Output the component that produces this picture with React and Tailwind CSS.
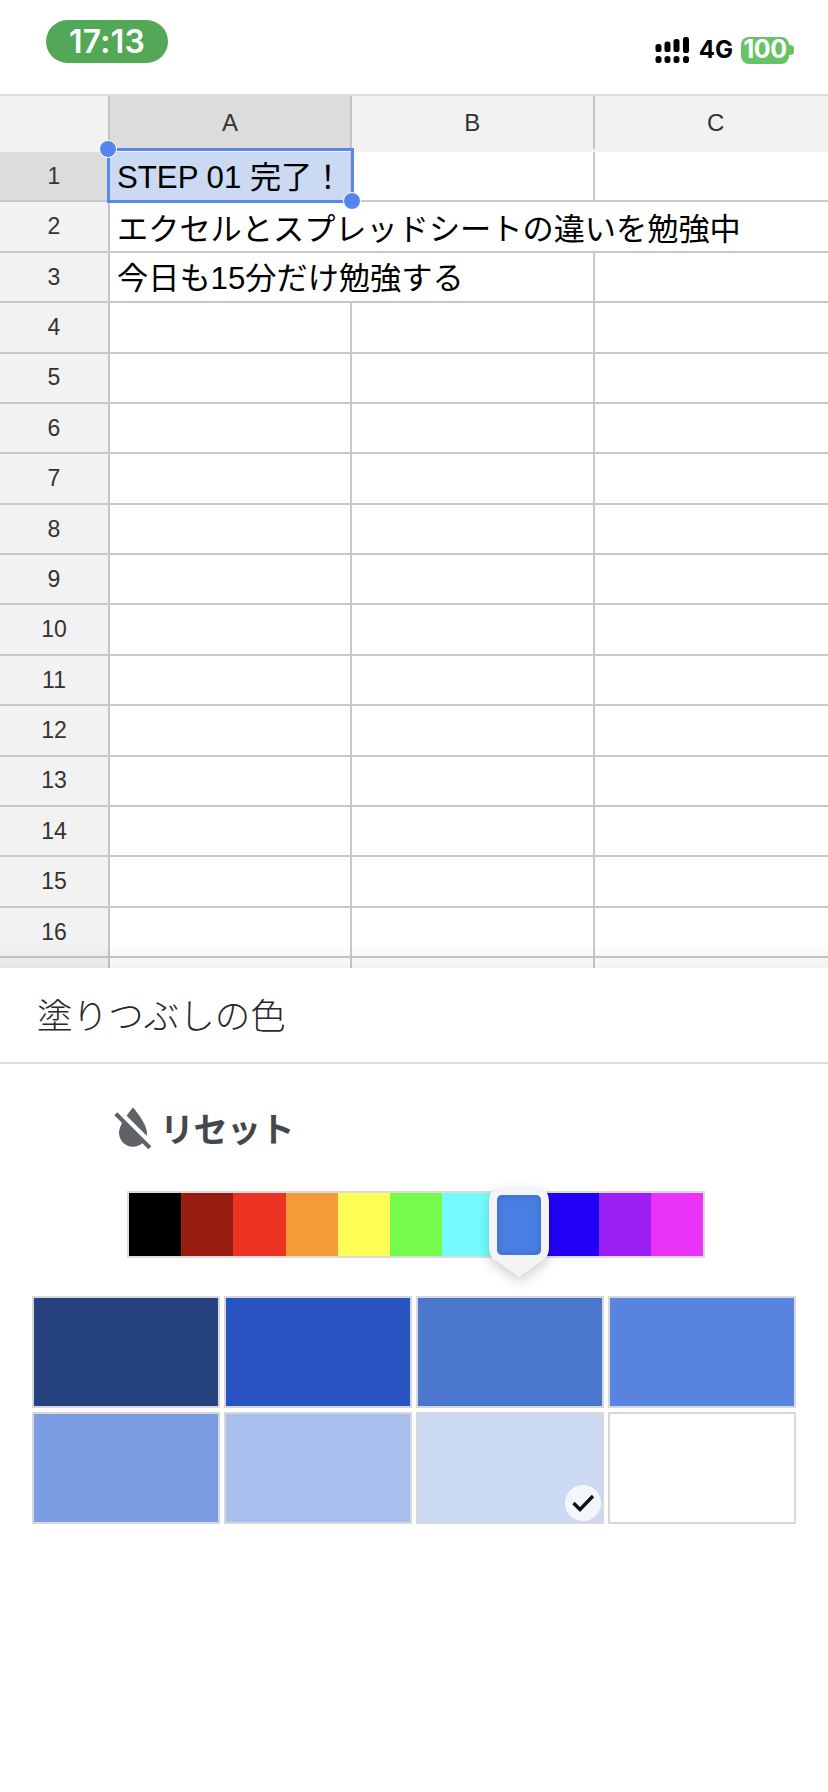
import React from "react";

const rows = Array.from({ length: 17 }, (_, i) => i + 1);
const hues = ["bg-[#000000]", "bg-[#981c10]", "bg-[#ec3324]", "bg-[#f29b38]", "bg-[#fffe54]", "bg-[#75fb4c]", "bg-[#74fbfd]", "bg-[#4a7fe3]", "bg-[#2100f5]", "bg-[#9c20f5]", "bg-[#ea33f7]"];
const tiles = ["bg-[#264380]", "bg-[#2853c2]", "bg-[#4b77ce]", "bg-[#5884e0]", "bg-[#7a9de3]", "bg-[#a9c0ee]", "bg-[#ccd9f2]", "bg-white"];

function Signal() {
  const cols = [[3.5, 7, 8], [12.5, 4.5, 10.5], [21.5, 2, 13], [31, 0, 16]];
  return (
    <svg width="36" height="28" viewBox="0 0 36 28" className="shrink-0">
      {cols.map(([x, y, h]) => (
        <g key={x} fill="#000">
          <rect x={x - 3} y={y + 1} width="6" height={h} rx="2.6" />
          <rect x={x - 3} y="20" width="6" height="7" rx="2.8" />
        </g>
      ))}
    </svg>
  );
}

function StatusBar() {
  return (
    <div className="flex h-[94px] items-start justify-between pl-[46px] pr-[34px] font-['Inter',sans-serif]">
      <div className="mt-[20px] flex h-[43px] w-[122px] items-center justify-center rounded-[22px] bg-[#53a858] text-[32px] font-semibold tracking-[0.2px] text-white">17:13</div>
      <div className="mt-[36px] flex items-center">
        <Signal />
        <span className="ml-[8px] text-[24px] leading-[28px] font-bold text-black">4G</span>
        <div className="ml-[8px] flex h-[27px] w-[48px] items-center justify-center rounded-[8px] bg-[#65c466] text-[25px] font-bold tracking-[-0.5px] text-white">100</div>
        <div className="h-[10px] w-[5px] rounded-r-[4px] bg-[#65c466]" />
      </div>
    </div>
  );
}

function Cell({ width, line = true, children, fill = "", pad = "pt-[4px]" }) {
  return (
    <div className={`flex h-full shrink-0 items-center overflow-visible whitespace-nowrap pl-[7px] text-[31.2px] text-black ${pad} ${width} ${line ? "border-r-2 border-[#c8c8c8]" : ""} ${fill}`}>
      {children}
    </div>
  );
}

function Row({ n }) {
  const selected = n === 1;
  return (
    <div className="flex h-[50.38px] shrink-0 border-b-2 border-[#c8c8c8]">
      <div className={`flex h-full w-[110px] shrink-0 items-center justify-center border-r-2 border-[#c4c4c4] text-[23px] text-[#333] ${selected ? "bg-[#dcdcdc]" : "bg-[#f2f2f2]"}`}>{n < 17 ? n : null}</div>
      {n === 2 ? (
        <Cell width="w-[727px]" line={false} pad="pt-[7px]">エクセルとスプレッドシートの違いを勉強中</Cell>
      ) : n === 3 ? (
        <>
          <Cell width="w-[484.5px]">今日も15分だけ勉強する</Cell>
          <Cell width="w-[242.5px]" line={false} />
        </>
      ) : (
        <>
          <Cell width="w-[242px]" fill={selected ? "bg-[#ccd9f2]" : ""}>{selected ? "STEP 01 完了！" : null}</Cell>
          <Cell width="w-[242.5px]" />
          <Cell width="w-[242.5px]" line={false} />
        </>
      )}
    </div>
  );
}

function Sheet() {
  return (
    <div className="relative h-[874px] overflow-hidden font-['Liberation_Sans','Noto_Sans_CJK_JP',sans-serif]">
      <div className="flex h-[58px] border-y-2 border-t-[#dcdcdf] border-b-transparent bg-[#f2f2f2] pb-[1px] text-[24px] text-[#333]">
        <div className="w-[110px] shrink-0 border-r-2 border-[#c4c4c4]" />
        <div className="flex w-[242px] shrink-0 items-center justify-center border-r-2 border-[#c4c4c4] bg-[#dcdcdc]">A</div>
        <div className="flex w-[242.5px] shrink-0 items-center justify-center border-r-2 border-[#c4c4c4]">B</div>
        <div className="flex w-[242.5px] shrink-0 items-center justify-center">C</div>
      </div>
      {rows.map((n) => <Row key={n} n={n} />)}
      <div className="pointer-events-none absolute left-[107px] top-[54px] h-[55px] w-[247px] border-[3px] border-[#5a87ea]">
        <div className="absolute -left-[11px] -top-[11px] h-[18px] w-[18px] rounded-full border border-white bg-[#5584ee]" />
        <div className="absolute -right-[10px] -bottom-[10px] h-[18px] w-[18px] rounded-full border border-white bg-[#5584ee]" />
      </div>
      <div className="pointer-events-none absolute inset-x-0 bottom-0 h-[26px] bg-gradient-to-b from-transparent to-black/5" />
    </div>
  );
}

function ResetIcon() {
  return (
    <svg width="56" height="56" viewBox="0 0 24 24" className="shrink-0" fill="#5f6368">
      <path d="M18 14c0-4-6-10.8-6-10.8s-1.33 1.51-2.73 3.52l8.59 8.59c.09-.42.14-.86.14-1.31zm-.88 3.12L12.5 12.5 5.27 5.27 4 6.55l3.32 3.32C6.55 11.32 6 12.79 6 14c0 3.31 2.69 6 6 6 1.52 0 2.9-.57 3.96-1.5l2.63 2.63 1.27-1.27-2.74-2.74z" />
    </svg>
  );
}

function Pin() {
  return (
    <div className="absolute left-[360px] -top-[7px] h-[93px] w-[60px]">
      <svg width="60" height="93" viewBox="0 0 60 93" className="absolute inset-0 drop-shadow-[0_5px_6px_rgba(0,0,0,0.18)]">
        <path d="M15 1H45Q60 1 60 16V62Q60 70 54 74L30 91L6 74Q0 70 0 62V16Q0 1 15 1Z" fill="#f4f4f4" />
      </svg>
      <div className="absolute left-[8px] top-[9px] h-[60px] w-[44px] rounded-[5px] bg-[#4a7fe3] shadow-[inset_0_0_8px_rgba(0,0,0,0.18)]" />
    </div>
  );
}

function Panel() {
  return (
    <div className="bg-white font-['Noto_Sans_CJK_JP',sans-serif]">
      <div className="flex h-[96px] items-center border-b-2 border-[#dcdce0] pb-[3px] pl-[37px] text-[35.5px] font-light text-[#26292c]">塗りつぶしの色</div>
      <div className="mt-[36px] flex h-[56px] items-center pl-[105px]">
        <ResetIcon />
        <span className="-ml-[1px] pb-[2px] text-[34px] font-bold tracking-[-0.5px] text-[#44484c]">リセット</span>
      </div>
      <div className="relative mt-[35px] ml-[127px] flex h-[67px] w-[578px] border-2 border-[#dcdcdc]">
        {hues.map((c) => <div key={c} className={`h-full flex-1 ${c}`} />)}
        <Pin />
      </div>
      <div className="mt-[38px] ml-[32px] grid w-[764px] grid-cols-4 gap-[4px]">
        {tiles.map((c, i) => (
          <div key={c} className={`relative h-[112px] border-2 border-[#d8d8dc] ${c}`}>
            {i === 6 && (
              <div className="absolute bottom-[1px] right-[1px] flex h-[36px] w-[36px] items-center justify-center rounded-full bg-[#f4f6fd]">
                <svg width="24" height="20" viewBox="0 0 24 20" fill="none" stroke="#111" strokeWidth="3.4">
                  <path d="M2.5 10L9 16.5L22 3" />
                </svg>
              </div>
            )}
          </div>
        ))}
      </div>
    </div>
  );
}

export default function App() {
  return (
    <div className="h-[1792px] w-[828px] overflow-hidden bg-white">
      <StatusBar />
      <Sheet />
      <Panel />
    </div>
  );
}
